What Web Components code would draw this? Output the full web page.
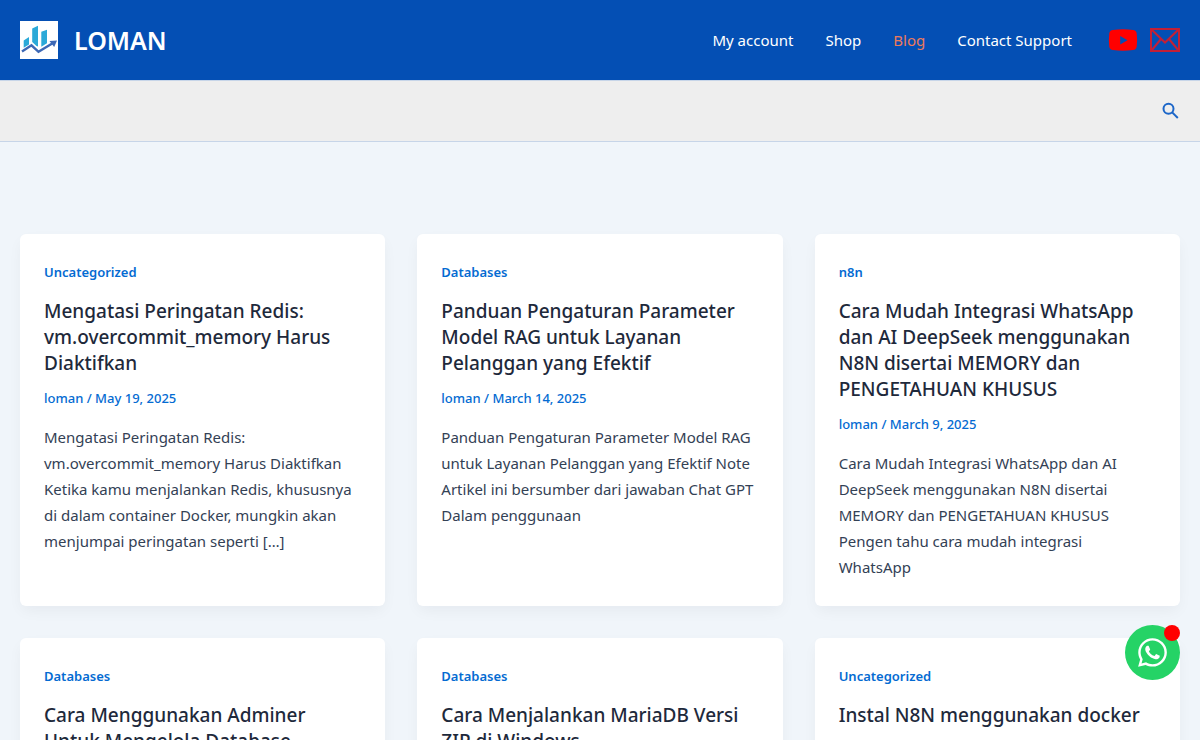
<!DOCTYPE html>
<html lang="id">
<head>
<meta charset="utf-8">
<meta name="viewport" content="width=device-width, initial-scale=1">
<title>Blog – LOMAN</title>
<style>
  :root {
    --brand: #044fb4;
    --link: #046bd2;
    --heading: #1e293b;
    --text: #334155;
    --line: #c7d5e8;
  }
  body {
    margin: 0;
    background: #f0f5fa;
    color: var(--text);
    font: 400 15px/26px "Noto Sans", "Open Sans", sans-serif;
  }
</style>
</head>
<body>
<blog-page></blog-page>

<script>
const define = (name, html) => {
  const template = document.createElement('template');
  template.innerHTML = html;
  customElements.define(name, class extends HTMLElement {
    constructor() {
      super();
      this.attachShadow({ mode: 'open' }).append(template.content.cloneNode(true));
    }
  });
};

define('site-brand', `
  <style>
    :host { display: block; }
    a { display: flex; align-items: center; gap: 16px; color: #fff; text-decoration: none; font-size: 25px; line-height: 32px; font-weight: 600; }
    svg { display: block; width: 38px; height: 38px; }
  </style>
  <a href="#home">
    <svg viewBox="0 0 38 38" aria-hidden="true">
      <path fill="#fff" d="M0 0h38v38H0z"/>
      <path fill="#2ba9d8" d="M3.700 19.500 9 16v7.500l-5.300 3.200zM12.200 7.500 18 4.800v20.700l-1.500-.500-4.300-4zM21.300 10.800 27 8.800v13.400l-5.700 3.600z"/>
      <path fill="none" stroke="#3d68b5" stroke-width="2.400" d="m2 30.500 9.500-6.200 7 6.500L33 22"/>
      <path fill="#3d68b5" d="m29.500 20 7.500-.600-2.800 6.600z"/>
    </svg>
    <span><slot></slot></span>
  </a>
`);

define('nav-link', `
  <style>
    :host { display: block; }
    a { color: inherit; text-decoration: none; }
  </style>
  <a href="#"><slot></slot></a>
`);

define('social-links', `
  <style>
    :host { display: flex; align-items: center; gap: 12px; }
    a { display: block; }
    svg { display: block; width: 30px; height: 30px; }
  </style>
  <a href="#youtube" aria-label="YouTube">
    <svg viewBox="0 0 30 30"><path fill="red" fill-rule="evenodd" d="M5 5q10-1.300 20 0 3.300.400 3.700 3.500.900 6.500 0 13-.400 3.100-3.700 3.500-10 1.300-20 0-3.300-.400-3.700-3.500-.900-6.500 0-13Q1.700 5.400 5 5zm7.200 6v8.400l7.300-4.200z"/></svg>
  </a>
  <a href="#mail" aria-label="Email">
    <svg viewBox="0 0 30 30" fill="none" stroke="#c32036" stroke-width="2"><path d="M1 4h28v22H1zM1.500 4.500l13.500 13 13.500-13M1.500 25.500l9.500-11.500M28.500 25.500 19 14"/></svg>
  </a>
`);

define('site-header', `
  <style>
    :host { display: flex; align-items: center; justify-content: space-between; box-sizing: border-box; min-height: 81px; padding: 0 20px; background: var(--brand); border-bottom: 1px solid var(--line); color: #fff; }
    .right { display: flex; align-items: center; gap: 36px; }
    nav { display: flex; gap: 32px; }
    .current { color: #ec7a5c; }
  </style>
  <site-brand>LOMAN</site-brand>
  <div class="right">
    <nav aria-label="Menu">
      <nav-link>My account</nav-link>
      <nav-link>Shop</nav-link>
      <nav-link class="current">Blog</nav-link>
      <nav-link>Contact Support</nav-link>
    </nav>
    <social-links></social-links>
  </div>
`);

define('search-bar', `
  <style>
    :host { display: flex; align-items: center; justify-content: flex-end; box-sizing: border-box; min-height: 61px; padding: 0 20px; background: #eee; border-bottom: 1px solid var(--line); }
    button { border: 0; padding: 0; background: none; color: #1c66c8; cursor: pointer; }
    svg { display: block; width: 20px; height: 20px; }
  </style>
  <button type="button" aria-label="Search">
    <svg viewBox="0 0 20 20" fill="none" stroke="currentColor" stroke-width="2"><circle cx="8.500" cy="7.700" r="5"/><path d="m12.200 11.400 5.600 5.600"/></svg>
  </button>
`);

define('post-card', `
  <style>
    :host { display: block; padding: 26px 24px; border-radius: 6px; background: #fff; box-shadow: 0 6px 15px -2px rgba(16, 24, 40, .05); }
    ::slotted(*) { text-decoration: none; }
    .category, .meta { color: var(--link); font-size: 13px; line-height: 24px; font-weight: 600; }
    .meta { font-weight: 500; }
    h2 { margin: 14px 0 10px; color: var(--heading); font-size: 19px; line-height: 26px; font-weight: 500; }
    p { margin: 14px 0 0; }
    .category ::slotted(a), .meta ::slotted(a), h2 ::slotted(a) { color: inherit; }
  </style>
  <article>
    <div class="category"><slot name="category"></slot></div>
    <h2><slot name="title"></slot></h2>
    <div class="meta"><slot name="meta"></slot></div>
    <p><slot></slot></p>
  </article>
`);

define('whatsapp-button', `
  <style>
    :host { position: fixed; right: 20px; bottom: 60px; }
    a { display: grid; place-items: center; width: 55px; height: 55px; border-radius: 50%; background: #25d366; color: #fff; }
    svg { display: block; width: 29px; height: 29px; }
    .dot { position: absolute; top: 0; right: 0; width: 16px; height: 16px; border-radius: 50%; background: red; }
  </style>
  <a href="#whatsapp" aria-label="WhatsApp">
    <svg viewBox="0 30 448 452" fill="currentColor"><path d="M380.900 97.100C339 55.100 283.200 32 223.900 32c-122.400 0-222 99.600-222 222 0 39.100 10.200 77.300 29.600 111L0 480l117.700-30.900c32.400 17.700 68.900 27 106.100 27h.100c122.300 0 224.100-99.600 224.100-222 0-59.300-25.200-115-67.100-157zm-157 341.600c-33.200 0-65.700-8.900-94-25.700l-6.700-4-69.800 18.300L72 359.200l-4.400-7c-18.500-29.400-28.200-63.300-28.200-98.200 0-101.700 82.800-184.500 184.600-184.500 49.300 0 95.600 19.200 130.400 54.100 34.800 34.900 56.200 81.200 56.100 130.500 0 101.800-84.900 184.600-186.600 184.600zm101.200-138.200c-5.500-2.800-32.800-16.200-37.900-18-5.100-1.900-8.800-2.800-12.500 2.800-3.700 5.600-14.300 18-17.600 21.800-3.200 3.700-6.500 4.200-12 1.400-32.600-16.300-54-29.100-75.500-66-5.700-9.800 5.700-9.100 16.300-30.300 1.800-3.700.900-6.900-.5-9.700-1.400-2.800-12.500-30.100-17.100-41.200-4.500-10.800-9.100-9.300-12.500-9.500-3.200-.2-6.900-.2-10.600-.2-3.700 0-9.700 1.400-14.800 6.900-5.100 5.600-19.400 19-19.400 46.300 0 27.300 19.900 53.700 22.600 57.400 2.800 3.700 39.100 59.700 94.800 83.800 35.200 15.200 49 16.500 66.600 13.900 10.700-1.600 32.800-13.400 37.400-26.400 4.600-13 4.600-24.100 3.200-26.400-1.300-2.500-5-3.900-10.500-6.600z"/></svg>
  </a>
  <span class="dot"></span>
`);

define('blog-page', `
  <style>
    :host { display: block; }
    main { display: grid; grid-template-columns: repeat(auto-fit, minmax(min(100%, 320px), 1fr)); gap: 32px; padding: 92px 20px; }
  </style>
  <site-header></site-header>
  <search-bar></search-bar>
  <main>
    <post-card>
      <a slot="category" href="#uncategorized">Uncategorized</a>
      <a slot="title" href="#redis">Mengatasi Peringatan Redis: vm.overcommit_memory Harus Diaktifkan</a>
      <span slot="meta">loman / May 19, 2025</span>
      Mengatasi Peringatan Redis: vm.overcommit_memory Harus Diaktifkan Ketika kamu menjalankan Redis, khususnya di dalam container Docker, mungkin akan menjumpai peringatan seperti […]
    </post-card>
    <post-card>
      <a slot="category" href="#databases">Databases</a>
      <a slot="title" href="#rag">Panduan Pengaturan Parameter Model RAG untuk Layanan Pelanggan yang Efektif</a>
      <span slot="meta">loman / March 14, 2025</span>
      Panduan Pengaturan Parameter Model RAG untuk Layanan Pelanggan yang Efektif Note Artikel ini bersumber dari jawaban Chat GPT Dalam penggunaan
    </post-card>
    <post-card>
      <a slot="category" href="#n8n">n8n</a>
      <a slot="title" href="#deepseek">Cara Mudah Integrasi WhatsApp dan AI DeepSeek menggunakan N8N disertai MEMORY dan PENGETAHUAN KHUSUS</a>
      <span slot="meta">loman / March 9, 2025</span>
      Cara Mudah Integrasi WhatsApp dan AI DeepSeek menggunakan N8N disertai MEMORY dan PENGETAHUAN KHUSUS Pengen tahu cara mudah integrasi WhatsApp
    </post-card>
    <post-card>
      <a slot="category" href="#databases">Databases</a>
      <a slot="title" href="#adminer">Cara Menggunakan Adminer Untuk Mengelola Database</a>
    </post-card>
    <post-card>
      <a slot="category" href="#databases">Databases</a>
      <a slot="title" href="#mariadb">Cara Menjalankan MariaDB Versi ZIP di Windows</a>
    </post-card>
    <post-card>
      <a slot="category" href="#uncategorized">Uncategorized</a>
      <a slot="title" href="#docker">Instal N8N menggunakan docker</a>
    </post-card>
  </main>
  <whatsapp-button></whatsapp-button>
`);
</script>
</body>
</html>
